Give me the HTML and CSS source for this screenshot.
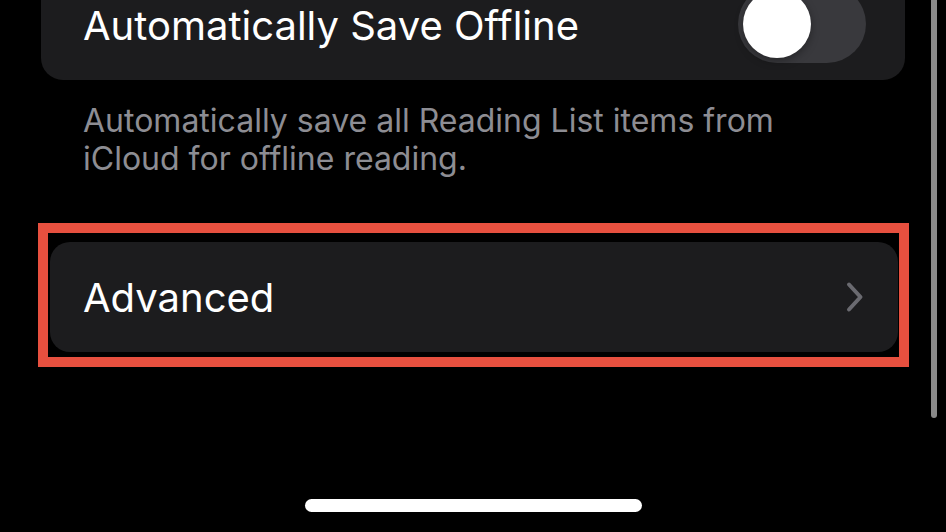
FILE: index.html
```html
<!DOCTYPE html>
<html>
<head>
<meta charset="utf-8">
<link rel="stylesheet" href="styles.css">
</head>
<body>
<div class="screen">
  <div class="card card-top">
    <span class="label label-top">Automatically Save Offline</span>
    <span class="toggle"><span class="knob"></span></span>
  </div>
  <p class="footer">Automatically save all Reading List items from<br>iCloud for offline reading.</p>
  <div class="highlight">
    <div class="card card-adv">
      <span class="label">Advanced</span>
      <svg class="chev" width="20" height="32" viewBox="0 0 20 32"><path d="M4 3.5 L15.5 16 L4 28.5" fill="none" stroke="#6a6a70" stroke-width="4" stroke-linecap="round" stroke-linejoin="round"/></svg>
    </div>
  </div>
  <div class="scrollbar"></div>
  <div class="home"></div>
</div>
</body>
</html>
```
FILE: styles.css
```css
html, body {
  margin: 0;
  padding: 0;
  background: #000;
}
.screen {
  position: relative;
  width: 946px;
  height: 532px;
  overflow: hidden;
  background: #000;
  font-family: Inter, "Noto Sans", sans-serif;
  color: #fff;
}
.card {
  background: #1c1c1e;
  display: flex;
  align-items: center;
  justify-content: space-between;
  box-sizing: border-box;
}
.card-top {
  margin: -32px 0 0 41px;
  width: 864px;
  height: 112px;
  border-radius: 22px;
  padding: 0 39px 0 42px;
}
.label {
  font-size: 40px;
  line-height: 48px;
  padding-top: 2px;
}
.label-top {
  padding-top: 4px;
}
.toggle {
  width: 128px;
  height: 78px;
  border-radius: 39px;
  background: #39393d;
  display: flex;
  align-items: center;
  padding-left: 5px;
  box-sizing: border-box;
}
.knob {
  width: 68px;
  height: 68px;
  border-radius: 50%;
  background: #fff;
  box-shadow: 0 3px 8px rgba(0,0,0,0.35);
}
.footer {
  margin: 22px 0 0 83px;
  font-size: 32px;
  line-height: 38px;
  color: #8d8d93;
}
.highlight {
  margin: 45px 0 0 38px;
  width: 871px;
  height: 144px;
  box-sizing: border-box;
  border: 10px solid #e7503f;
  padding: 9px 1px 5px 2px;
}
.card-adv {
  height: 110px;
  border-radius: 20px;
  padding: 0 33px 0 33px;
}
.chev {
  display: block;
}
.scrollbar {
  position: absolute;
  left: 931px;
  top: 0;
  width: 6px;
  height: 418px;
  border-radius: 0 0 3px 3px;
  background: #8a8a8a;
}
.home {
  position: absolute;
  left: 305px;
  top: 499px;
  width: 337px;
  height: 13px;
  border-radius: 7px;
  background: #fff;
}
```
